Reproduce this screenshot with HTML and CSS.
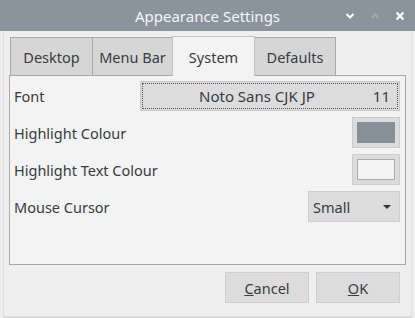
FILE: index.html
```html
<!DOCTYPE html>
<html lang="en">
<head>
  <meta charset="UTF-8">
  <title>Appearance Settings</title>
  <link rel="stylesheet" href="styles.css">
</head>
<body>
  <div class="window">
    <div class="titlebar">
      <span class="title">Appearance Settings</span>
      <div class="controls">
        <svg width="10" height="8" viewBox="0 0 10 8"><path d="M1.5 2 L5 5.5 L8.5 2" fill="none" stroke="#fff" stroke-width="2"/></svg>
        <svg width="10" height="8" viewBox="0 0 10 8"><path d="M1.5 6 L5 2.5 L8.5 6" fill="none" stroke="#a3abb2" stroke-width="2"/></svg>
        <svg width="10" height="10" viewBox="0 0 10 10"><path d="M1.5 1.5 L8.5 8.5 M8.5 1.5 L1.5 8.5" fill="none" stroke="#fff" stroke-width="2.2"/></svg>
      </div>
    </div>

    <div class="body">
      <div class="tabs">
        <div class="tab">Desktop</div>
        <div class="tab">Menu Bar</div>
        <div class="tab active">System</div>
        <div class="tab">Defaults</div>
      </div>

      <div class="panel">
        <div class="row">
          <span class="label">Font</span>
          <button class="font-btn">
            <span class="font-name">Noto Sans CJK JP</span>
            <span class="font-size">11</span>
          </button>
        </div>
        <div class="row">
          <span class="label">Highlight Colour</span>
          <button class="swatch-btn"><span class="swatch dark"></span></button>
        </div>
        <div class="row">
          <span class="label">Highlight Text Colour</span>
          <button class="swatch-btn"><span class="swatch light"></span></button>
        </div>
        <div class="row">
          <span class="label">Mouse Cursor</span>
          <button class="combo">
            <span>Small</span>
            <svg width="10" height="6" viewBox="0 0 10 6"><path d="M1 1 L9 1 L5 5 Z" fill="#333"/></svg>
          </button>
        </div>
      </div>

      <div class="actions">
        <button class="action"><u>C</u>ancel</button>
        <button class="action"><u>O</u>K</button>
      </div>
    </div>
  </div>
</body>
</html>
```

FILE: styles.css
```css
* {
  box-sizing: border-box;
}

body {
  margin: 0;
  font-family: 'Noto Sans', 'Open Sans', sans-serif;
  font-size: 14px;
  color: #373c41;
  background: #eeeeee;
}

.window {
  width: 415px;
  height: 318px;
  display: flex;
  flex-direction: column;
}

.titlebar {
  height: 31px;
  background: #8b949c;
  position: relative;
  display: flex;
  align-items: center;
  justify-content: center;
}

.title {
  color: #f4f5f6;
  font-size: 15px;
}

.controls {
  position: absolute;
  right: 10px;
  top: 11px;
  display: flex;
  gap: 15px;
  align-items: center;
}

.body {
  flex: 1;
  background: #efefef;
  border-left: 1px solid #e0e0e0;
  border-right: 1px solid #e0e0e0;
  border-bottom: 2px solid #dadada;
  margin: 0 3px 0 3px;
  padding: 5px 5px 0 5px;
}

.tabs {
  display: flex;
  align-items: flex-end;
  height: 39px;
  margin-left: 1px;
}

.tab {
  height: 38px;
  padding: 0;
  white-space: nowrap;
  display: flex;
  align-items: center;
  justify-content: center;
  background: #d6d6d6;
  border: 1px solid #a9a9a9;
  border-bottom: none;
  margin-right: -1px;
  font-size: 14.5px;
}

.tab:nth-child(1) { width: 83px; }
.tab:nth-child(2) { width: 81px; }
.tab:nth-child(3) { width: 83px; }
.tab:nth-child(4) { width: 82px; }

.tab.active {
  height: 40px;
  background: #f3f3f3;
  border-color: #c4c4c4;
  position: relative;
  z-index: 1;
  margin-bottom: -1px;
}

.panel {
  height: 190px;
  background: #f3f3f3;
  border: 1px solid #a9a9a9;
  padding: 4px 5px 0 4px;
  display: flex;
  flex-direction: column;
  gap: 6px;
}

.row {
  display: flex;
  align-items: center;
  justify-content: space-between;
  height: 31px;
}

.label {
  font-size: 14.5px;
}

button {
  font-family: inherit;
  color: inherit;
  margin: 0;
}

.font-btn {
  width: 260px;
  height: 30px;
  background: #dcdcdc;
  border: 1px solid #cacaca;
  outline: 1px dotted #555;
  outline-offset: -3px;
  display: flex;
  align-items: center;
  padding: 0 9px 0 0;
  font-size: 15px;
}

.font-name {
  flex: 1;
  text-align: center;
}

.swatch-btn {
  width: 48px;
  height: 31px;
  background: #dcdcdc;
  border: 1px solid #cdcdcd;
  padding: 4px;
  display: flex;
}

.swatch {
  flex: 1;
  border: 1px solid #b8b8b8;
}

.swatch.dark {
  background: #878f99;
  border-color: #878f99;
}

.swatch.light {
  background: #f4f4f4;
  border-color: #aaaaaa;
}

.combo {
  width: 92px;
  height: 31px;
  background: #dcdcdc;
  border: 1px solid #cdcdcd;
  display: flex;
  align-items: center;
  justify-content: space-between;
  padding: 0 7px 0 4px;
  font-size: 14.5px;
}

.actions {
  display: flex;
  justify-content: flex-end;
  gap: 7px;
  padding: 7px 6px 0 0;
}

.action {
  width: 84px;
  height: 31px;
  background: #dcdcdc;
  border: 1px solid #cfcfcf;
  font-size: 14.5px;
}
```
